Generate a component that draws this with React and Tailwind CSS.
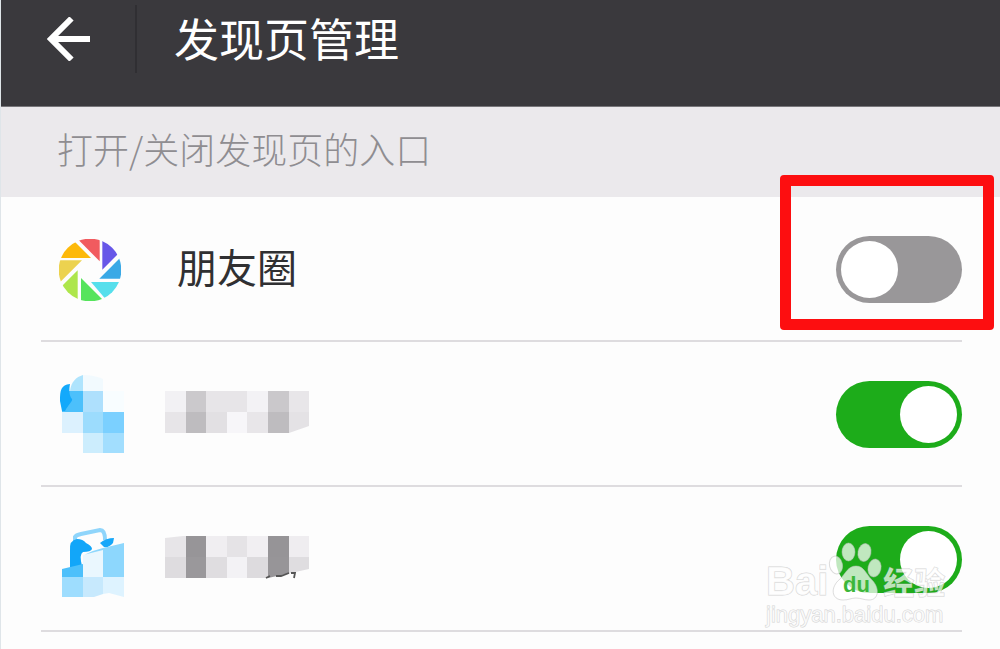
import React from "react";

const HAN = "font-['Noto_Sans_CJK_SC',sans-serif]";

function BackArrow() {
  return (
    <svg viewBox="0 0 44 44" className="h-11 w-11" fill="none" stroke="#fff" strokeWidth="6" aria-hidden="true">
      <path d="M24.5 1.5 4 22 24.5 42.5M4 22H43" />
    </svg>
  );
}

function MomentsIcon() {
  return (
    <svg viewBox="26 28 186 186" className="h-[62px] w-[62px]" aria-hidden="true">
      <defs>
        <clipPath id="disc">
          <circle cx="119" cy="121" r="94" />
        </clipPath>
      </defs>
      <g clipPath="url(#disc)">
        <path d="M74 20H148V95Z" fill="#f15b5f" />
        <path d="M156 20H220V56L156 120Z" fill="#6757e8" />
        <path d="M147 147 220 74V147Z" fill="#3aa9e6" />
        <path d="M122 157H220L168 211Z" fill="#56dfec" />
        <path d="M92 145 164 217H92Z" fill="#56e45c" />
        <path d="M82 122V217L26 178Z" fill="#aee64b" />
        <path d="M20 92H95L26 161Z" fill="#ecd24f" />
        <path d="M20 85V20H57L122 85Z" fill="#fdb90b" />
      </g>
    </svg>
  );
}

function ChatMosaicIcon() {
  return (
    <svg viewBox="59 375 66 80" className="h-20 w-[66px]" aria-hidden="true">
      <path d="M70 391C71 382 76 377 83 375V391Z" fill="#afe4fd" />
      <path d="M83 375Q94 375 103 379V391H83Z" fill="#f2fafe" />
      <path d="M103 391H124V412H103Z" fill="#f8fdff" />
      <path d="M69 391H83V412H62V402Z" fill="#4cc0fb" />
      <path d="M70 384C61 385 60 390 60 401L62 411H65C68 405 73 401 72 399C69 396 69 389 70 384Z" fill="#13a9fb" />
      <path d="M83 391H103V412H83Z" fill="#aee0fd" />
      <path d="M62 412H83V433H62Z" fill="#dcf1fe" />
      <path d="M83 412H103V433H83Z" fill="#9cdcfd" />
      <path d="M103 412H124V433H103Z" fill="#7bd0ff" />
      <path d="M83 433H103V453H83Z" fill="#ccedfd" />
      <path d="M103 433H124V453H103Z" fill="#a2defe" />
    </svg>
  );
}

function BagMosaicIcon() {
  return (
    <svg viewBox="59 523 66 74" className="h-[74px] w-[66px]" aria-hidden="true">
      <path d="M75 541V537Q76 535 81 534L100 530Q105 530 105 540" fill="none" stroke="#8fd5fb" strokeWidth="4" />
      <path d="M70 568V551Q69 540 77 539Q83 539 86 543Q92 546 92 549Q91 552 83 552Q79 554 82 566Z" fill="#12a6f9" />
      <path d="M100 543Q106 538 114 538L113 543Q109 548 104 547Z" fill="#16a7f9" />
      <path d="M62 569 83 564V577H62Z" fill="#4dc0fb" />
      <path d="M83 555 103 549V577H83Z" fill="#eaf7fe" />
      <path d="M85 554.5Q94 550 103 548L124 543V577H103V550Z" fill="#8dd7fd" />
      <path d="M62 577H83V597H62Z" fill="#9eddfe" />
      <path d="M83 577H103V594L94 597H83Z" fill="#c7e9fd" />
      <path d="M103 577H124V597L109 593 103 594Z" fill="#def3ff" />
    </svg>
  );
}

function MosaicLabel({ top, bottom, cut, scraps }) {
  return (
    <svg viewBox="0 0 144 44" className="h-11 w-36" aria-hidden="true">
      <clipPath id={cut.id}>
        <path d={cut.d} />
      </clipPath>
      <g clipPath={`url(#${cut.id})`} shapeRendering="crispEdges">
        {top.map((c, i) => (
          <rect key={i} x={i * 20.6} y="0" width="20.6" height="21" fill={c} />
        ))}
        {bottom.map((c, i) => (
          <rect key={i} x={i * 20.6} y="21" width="20.6" height="21" fill={c} />
        ))}
      </g>
      {scraps && (
        <path d="M101 42 105 40M111 40 116 40 124 37M126 37H130L129 42" fill="none" stroke="#555" strokeWidth="1.8" />
      )}
    </svg>
  );
}

function Toggle({ label, defaultChecked }) {
  return (
    <input
      type="checkbox"
      role="switch"
      aria-label={label}
      defaultChecked={defaultChecked}
      className="block h-[67px] w-[126px] cursor-pointer appearance-none rounded-full bg-[#999799] p-[5px] before:block before:h-[57px] before:w-[57px] before:rounded-full before:bg-white checked:bg-[#1dac1a] checked:before:ml-auto"
    />
  );
}

function Row({ icon, children, toggle }) {
  return (
    <li className="ml-10 mr-[38px] flex h-[145px] items-center border-b-2 border-[#dedcdf] pl-[18px] pt-0.5">
      <div className="flex w-[106px] shrink-0">{icon}</div>
      <div className="flex min-w-0 flex-1 pb-1">{children}</div>
      {toggle}
    </li>
  );
}

function Watermark() {
  const outline =
    "text-white/70 [-webkit-text-stroke:1px_rgba(170,170,170,0.5)] [paint-order:stroke_fill]";
  return (
    <div className="pointer-events-none absolute right-[54px] bottom-5 w-[180px] whitespace-nowrap">
      <div className="flex h-[60px] items-end">
        <span className={`font-['Liberation_Sans',sans-serif] text-[40px] leading-10 font-bold ${outline}`}>Bai</span>
        <svg viewBox="827 541 55 60" className="h-[60px] w-[55px] shrink-0" aria-hidden="true">
          <g fill="#fff" fillOpacity=".72" stroke="#bbb" strokeOpacity=".5" strokeWidth="1">
            <ellipse cx="835" cy="565" rx="6.5" ry="9" transform="rotate(-12 835 565)" />
            <ellipse cx="847.5" cy="552" rx="6.5" ry="9" />
            <ellipse cx="863.5" cy="552.5" rx="6.5" ry="9" transform="rotate(12 863.5 552.5)" />
            <ellipse cx="873.5" cy="568" rx="6.5" ry="9" transform="rotate(12 873.5 568)" />
            <path d="M855 566C847 566 845 573 839 579C829 587 830 600 842 600C848 600 850 598 855 598C860 598 863 600 868 600C878 600 879 588 871 580C865 574 863 566 855 566Z" />
          </g>
          <text x="842" y="592" fontFamily="Liberation Sans" fontWeight="700" fontSize="22" fill="#3cb73a">du</text>
        </svg>
        <span className={`${HAN} text-[31px] leading-10 font-bold ${outline}`}>经验</span>
      </div>
      <div className={`font-['Liberation_Sans',sans-serif] text-[22px] leading-7 ${outline}`}>jingyan.baidu.com</div>
    </div>
  );
}

export default function App() {
  return (
    <main className={`relative min-h-screen overflow-hidden border-l border-[#dfe5e9] bg-[#fdfdfd] ${HAN}`}>
      <header className="flex h-[107px] items-center border-b border-[#77767a] bg-[#3a393d] pb-7 pl-[46px] text-white">
        <button type="button" aria-label="返回" className="cursor-pointer">
          <BackArrow />
        </button>
        <span className="ml-11 h-[68px] w-0.5 bg-[#302f33]" />
        <h1 className="ml-[37px] pb-1 text-[45px] leading-none">发现页管理</h1>
      </header>
      <h2 className="flex h-[90px] items-center bg-[#ebe9ec] pb-2 pl-14 text-[36px] leading-none font-light text-[#8f8d91]">
        打开/关闭发现页的入口
      </h2>
      <ul>
        <Row
          icon={<MomentsIcon />}
          toggle={
            <div className="relative">
              <Toggle label="朋友圈" />
              <div className="pointer-events-none absolute -top-[61px] -right-8 -bottom-[27px] -left-14 rounded border-[11px] border-[#fd0e10]" />
            </div>
          }
        >
          <span className="pb-1 pl-3 text-[40px] leading-none text-[#303032]">朋友圈</span>
        </Row>
        <Row icon={<ChatMosaicIcon />} toggle={<Toggle label="入口二" defaultChecked />}>
          <MosaicLabel
            top={["#f2f1f4", "#cbc9cc", "#e7e5e8", "#e7e5e8", "#f3f2f5", "#cac8cb", "#e8e6e9"]}
            bottom={["#e7e5e8", "#bebcbf", "#e2e0e3", "#f7f6f9", "#e8e6e9", "#bebcbf", "#e4e2e5"]}
            cut={{ id: "cut-a", d: "M0 0H144V35L124 42H0Z" }}
          />
        </Row>
        <Row icon={<BagMosaicIcon />} toggle={<Toggle label="入口三" defaultChecked />}>
          <MosaicLabel
            top={["#e7e5e8", "#979598", "#f0eef1", "#e5e3e6", "#f1eff2", "#969497", "#efedf0"]}
            bottom={["#dedcdf", "#9a989b", "#dfdde0", "#f3f2f5", "#dddbde", "#979598", "#dfdde0"]}
            cut={{ id: "cut-b", d: "M0 2 18 0H144V33L103 42H0Z" }}
            scraps
          />
        </Row>
      </ul>
      <Watermark />
    </main>
  );
}
